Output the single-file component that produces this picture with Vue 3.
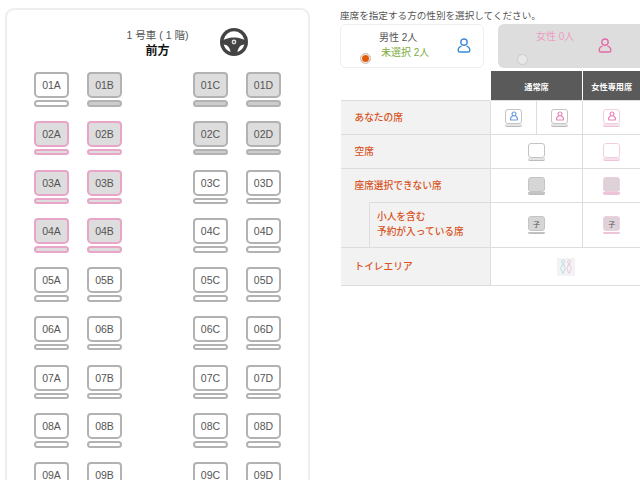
<script setup>
// which seats are taken, everything else is empty
const grayRows = { '01': ['B', 'C', 'D'], '02': ['C', 'D'] }
const pinkRows = { '02': ['A', 'B'], '03': ['A', 'B'], '04': ['A', 'B'] }

const rows = ['01', '02', '03', '04', '05', '06', '07', '08', '09']
const letters = ['A', 'B', 'C', 'D']

function seatClass(row, letter) {
  return {
    'seat-right': letter === 'C',
    'seat-gray': grayRows[row]?.includes(letter),
    'seat-pink': pinkRows[row]?.includes(letter),
  }
}
</script>

<template>
  <div class="page">
    <section class="card">
      <header class="card-head">
        <div></div>
        <div class="head-text">
          <p class="car">1 号車 ( 1 階)</p>
          <p class="front">前方</p>
        </div>
        <svg class="wheel" width="28" height="28" viewBox="-14 -14 28 28">
          <circle r="14" fill="#444" />
          <path d="M-10.4 -2.2A10.6 10.6 0 0 1 10.4 -2.2C6 -3.8 3.5 -4.4 0 -4.4C-3.5 -4.4 -6 -3.8 -10.4 -2.2Z" fill="#fff" />
          <path d="M-10.3 2.4C-7 2.6 -4.6 4.2 -3.4 9.9A10.6 10.6 0 0 1 -10.3 2.4Z" fill="#fff" />
          <path d="M10.3 2.4C7 2.6 4.6 4.2 3.4 9.9A10.6 10.6 0 0 0 10.3 2.4Z" fill="#fff" />
          <circle r="2.4" fill="#ddd" />
          <circle r="1.1" fill="#555" />
        </svg>
      </header>
      <div class="seats">
        <div v-for="row in rows" :key="row" class="seat-row">
          <div v-for="letter in letters" :key="letter" class="seat" :class="seatClass(row, letter)">
            <div class="seat-body">{{ row }}{{ letter }}</div>
            <div class="seat-bar"></div>
          </div>
        </div>
      </div>
    </section>

    <section class="side">
      <p class="intro">座席を指定する方の性別を選択してください。</p>
      <div class="genders">
        <div class="gender male">
          <span class="radio radio-on"></span>
          <div class="gender-text">
            <p>男性 2人</p>
            <p class="left-count">未選択 2人</p>
          </div>
          <svg class="person" width="14" height="15" viewBox="0 0 14 16" fill="none" stroke="#3b8ad9" stroke-width="1.5">
            <circle cx="7" cy="4.4" r="3.4" />
            <path d="M4.4 8.6C2 9.2 .8 11 .8 13.2C.8 14.4 1.4 15 2.6 15H11.4C12.6 15 13.2 14.4 13.2 13.2C13.2 11 12 9.2 9.6 8.6" />
          </svg>
        </div>
        <div class="gender female">
          <span class="radio"></span>
          <div class="gender-text">
            <p class="female-count">女性 0人</p>
          </div>
          <svg class="person" width="14" height="15" viewBox="0 0 14 16" fill="none" stroke="#e868a8" stroke-width="1.5">
            <circle cx="7" cy="4.4" r="3.4" />
            <path d="M4.4 8.6C2 9.2 .8 11 .8 13.2C.8 14.4 1.4 15 2.6 15H11.4C12.6 15 13.2 14.4 13.2 13.2C13.2 11 12 9.2 9.6 8.6" />
          </svg>
        </div>
      </div>

      <table class="legend">
        <colgroup>
          <col style="width: 29px" />
          <col style="width: 121px" />
          <col style="width: 46px" />
          <col style="width: 46px" />
          <col style="width: 58px" />
        </colgroup>
        <thead>
          <tr class="row-head">
            <th colspan="2" class="blank"></th>
            <th colspan="2">通常席</th>
            <th>女性専用席</th>
          </tr>
        </thead>
        <tbody>
          <tr class="row-a">
            <td colspan="2" class="label">あなたの席</td>
            <td>
              <div class="mini">
                <div class="mini-body">
                  <svg width="8" height="10" viewBox="0 0 14 16" fill="none" stroke="#6d9be0" stroke-width="2">
                    <circle cx="7" cy="4.4" r="3.4" />
                    <path d="M4.4 8.6C2 9.2 .8 11 .8 13.2C.8 14.4 1.4 15 2.6 15H11.4C12.6 15 13.2 14.4 13.2 13.2C13.2 11 12 9.2 9.6 8.6" />
                  </svg>
                </div>
                <div class="mini-bar"></div>
              </div>
            </td>
            <td>
              <div class="mini">
                <div class="mini-body">
                  <svg width="8" height="10" viewBox="0 0 14 16" fill="none" stroke="#e884bb" stroke-width="2">
                    <circle cx="7" cy="4.4" r="3.4" />
                    <path d="M4.4 8.6C2 9.2 .8 11 .8 13.2C.8 14.4 1.4 15 2.6 15H11.4C12.6 15 13.2 14.4 13.2 13.2C13.2 11 12 9.2 9.6 8.6" />
                  </svg>
                </div>
                <div class="mini-bar"></div>
              </div>
            </td>
            <td>
              <div class="mini mini-pink">
                <div class="mini-body">
                  <svg width="8" height="10" viewBox="0 0 14 16" fill="none" stroke="#e884bb" stroke-width="2">
                    <circle cx="7" cy="4.4" r="3.4" />
                    <path d="M4.4 8.6C2 9.2 .8 11 .8 13.2C.8 14.4 1.4 15 2.6 15H11.4C12.6 15 13.2 14.4 13.2 13.2C13.2 11 12 9.2 9.6 8.6" />
                  </svg>
                </div>
                <div class="mini-bar"></div>
              </div>
            </td>
          </tr>
          <tr class="row-a">
            <td colspan="2" class="label">空席</td>
            <td colspan="2">
              <div class="mini"><div class="mini-body"></div><div class="mini-bar"></div></div>
            </td>
            <td>
              <div class="mini mini-pink"><div class="mini-body"></div><div class="mini-bar"></div></div>
            </td>
          </tr>
          <tr class="row-a">
            <td colspan="2" class="label label-open">座席選択できない席</td>
            <td colspan="2">
              <div class="mini mini-full"><div class="mini-body"></div><div class="mini-bar"></div></div>
            </td>
            <td>
              <div class="mini mini-full mini-pink"><div class="mini-body"></div><div class="mini-bar"></div></div>
            </td>
          </tr>
          <tr class="row-b">
            <td class="label label-indent"></td>
            <td class="label label-child">小人を含む<br />予約が入っている席</td>
            <td colspan="2">
              <div class="mini mini-full"><div class="mini-body kid">子</div><div class="mini-bar"></div></div>
            </td>
            <td>
              <div class="mini mini-full mini-pink"><div class="mini-body kid">子</div><div class="mini-bar"></div></div>
            </td>
          </tr>
          <tr class="row-c">
            <td colspan="2" class="label">トイレエリア</td>
            <td colspan="3" class="toilet-cell">
              <svg class="toilet" width="18" height="18" viewBox="0 0 18 18" fill="none" stroke-width="0.8">
                <rect width="18" height="18" fill="#f1f3f5" stroke="none" />
                <g stroke="#b5d8e0">
                  <circle cx="6" cy="3.6" r="1.5" />
                  <path d="M6 5.6L3.5 10.5L6 15.5L8.2 10.5Z" />
                </g>
                <g stroke="#ecbcd2">
                  <circle cx="12" cy="3.6" r="1.5" />
                  <path d="M12 5.6L9.8 10.5L12 15.5L14.5 10.5Z" />
                </g>
              </svg>
            </td>
          </tr>
        </tbody>
      </table>
    </section>
  </div>
</template>

<style scoped>
.page {
  display: flex;
  width: 640px;
  height: 480px;
  overflow: hidden;
  font-family: "Liberation Sans", "Noto Sans CJK JP", sans-serif;
  color: #555;
}
p {
  margin: 0;
}

/* seat map */
.card {
  flex: none;
  box-sizing: border-box;
  width: 305px;
  height: 560px;
  margin: 8px 0 0 5px;
  padding: 18px 0 0 27px;
  border: 2px solid #eee;
  border-radius: 9px;
}
.card-head {
  display: grid;
  grid-template-columns: 1fr auto 1fr;
  margin-left: -27px;
  margin-bottom: 12px;
}
.head-text {
  text-align: center;
}
.car {
  font-size: 10.5px;
  line-height: 14px;
}
.front {
  font-size: 12px;
  font-weight: 700;
  line-height: 18px;
  color: #111;
}
.wheel {
  margin-left: 32px;
}
.seats {
  display: flex;
  flex-direction: column;
  gap: 14.25px;
}
.seat-row {
  display: flex;
  gap: 18px;
}
.seat {
  width: 35px;
}
.seat-right {
  margin-left: 53px;
}
.seat-body {
  box-sizing: border-box;
  height: 26px;
  border: 2px solid #b2b2b2;
  border-radius: 4px 4px 5px 5px;
  font-size: 10.5px;
  line-height: 23px;
  text-align: center;
  color: #555;
}
.seat-bar {
  box-sizing: border-box;
  height: 6.5px;
  margin-top: 2px;
  border: 2px solid #b2b2b2;
  border-radius: 4px;
}
.seat-gray .seat-body {
  background: #ddd;
}
.seat-gray .seat-bar {
  background: #ccc;
}
.seat-pink .seat-body {
  background: #ddd;
  border-color: #e8a5c8;
}
.seat-pink .seat-bar {
  background: #ddd;
  border-color: #e8a5c8;
}

/* right column */
.side {
  flex: none;
  width: 300px;
  margin-left: 30px;
}
.intro {
  margin-top: 10px;
  font-size: 9.6px;
  line-height: 12px;
  white-space: nowrap;
}
.genders {
  display: flex;
  gap: 14px;
  width: 320px;
  margin-top: 2px;
}
.gender {
  flex: none;
  display: flex;
  box-sizing: border-box;
  height: 44px;
  border-radius: 6px;
  font-size: 10px;
}
.male {
  width: 144px;
  border: 1px solid #eee;
}
.female {
  width: 170px;
  background: #ddd;
}
.radio {
  flex: none;
  align-self: flex-end;
  box-sizing: border-box;
  width: 11px;
  height: 11px;
  margin: 0 0 3px 19px;
  border: 1px solid #ccc;
  border-radius: 50%;
  background: #e8e8e8;
}
.radio-on {
  background: #e05a0c;
  box-shadow: inset 0 0 0 1px #fff;
}
.gender-text {
  width: 58px;
  margin: 6px 0 0 8px;
  line-height: 14.5px;
  white-space: nowrap;
}
.left-count {
  padding-left: 2px;
  color: #7cab3c;
}
.female-count {
  color: #ee9cc4;
}
.person {
  margin: 13px 0 0 20px;
}
.female .person {
  margin-left: 4px;
  margin-top: 14px;
}

/* legend table */
.legend {
  table-layout: fixed;
  width: 300px;
  margin-top: 3px;
  border-collapse: collapse;
}
.legend td {
  padding: 0;
  border: 1px solid #ddd;
  text-align: center;
}
.legend td:last-child {
  border-right: 0;
}
.row-head th {
  height: 29px;
  padding: 0;
  border-left: 1px solid #fff;
  background: #5a5a5a;
  color: #fff;
  font-size: 8.2px;
  font-weight: 700;
}
.row-head .blank {
  background: none;
}
.row-a {
  height: 34px;
}
.row-b {
  height: 45px;
}
.row-c {
  height: 38px;
}
.legend .label {
  padding: 0 0 2px 14px;
  border-left: 0;
  background: #f2f2f2;
  color: #d9541e;
  font-size: 9.7px;
  font-weight: 500;
  text-align: left;
}
.legend .label-open {
  border-bottom: 0;
}
.legend .label-indent {
  padding: 0;
  border-top: 0;
  border-right: 1px solid #ddd;
}
.legend .label-child {
  padding-left: 7px;
  line-height: 15.5px;
  white-space: nowrap;
}
.mini {
  width: 17px;
  margin: 0 auto;
}
.mini-body {
  display: flex;
  align-items: center;
  justify-content: center;
  box-sizing: border-box;
  height: 15px;
  border: 1px solid #c4c4c4;
  border-radius: 3px;
}
.mini-bar {
  box-sizing: border-box;
  height: 2.5px;
  margin-top: 0.5px;
  border-bottom: 1px solid #bbb;
  border-radius: 0 0 2px 2px;
  background: #e4e4e4;
}
.mini-pink .mini-body {
  border-color: #f0cfe0;
}
.mini-pink .mini-bar {
  border-color: #eec4da;
  background: #f6e0eb;
}
.mini-full .mini-body {
  background: #d6d6d6;
}
.mini-full .mini-bar {
  background: #c4c4c4;
}
.mini-full.mini-pink .mini-body {
  background: #dcd2d7;
}
.mini-full.mini-pink .mini-bar {
  background: #eec4da;
}
.kid {
  font-size: 7px;
  color: #555;
}
.toilet {
  display: block;
  margin: 0 auto;
}
</style>

<style>
body {
  background: #fff;
}
</style>
